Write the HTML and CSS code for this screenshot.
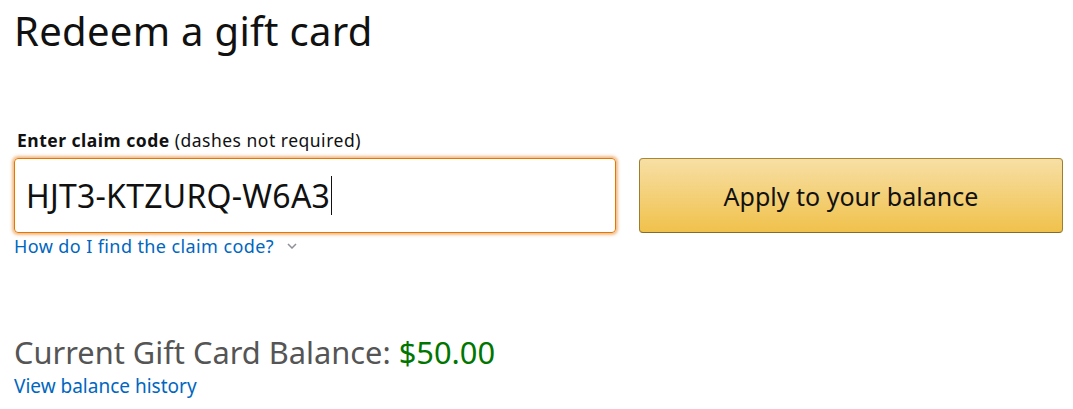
FILE: index.html
```html
<!DOCTYPE html>
<html lang="en">
<head>
<meta charset="utf-8">
<title>Redeem a gift card</title>
<link rel="stylesheet" href="styles.css">
</head>
<body>
<main class="page">
  <h1 class="title">Redeem a gift card</h1>
  <section class="claim">
    <label class="label" for="code"><b>Enter claim code</b> (dashes not required)</label>
    <div class="row">
      <div class="input"><span class="code">HJT3-KTZURQ-W6A3</span><span class="caret"></span></div>
      <button class="apply">Apply to your balance</button>
    </div>
    <a class="link find" href="#">How do I find the claim code?<svg class="chev" width="10" height="6" viewBox="0 0 10 6"><path d="M1 1l4 4 4-4" fill="none" stroke="#8d9096" stroke-width="1.5"/></svg></a>
  </section>
  <section class="balance">
    <div class="bal-line">Current Gift Card Balance: <span class="amount">$50.00</span></div>
    <a class="link history" href="#">View balance history</a>
  </section>
</main>
</body>
</html>
```
FILE: styles.css
```css
html, body { margin: 0; padding: 0; background: #fff; }
body { font-family: "Noto Sans", "Open Sans", sans-serif; color: #111; }
.page { padding: 4px 10px 0 14px; }
.title { font-size: 40px; letter-spacing: 0.3px; font-weight: 400; margin: 0; line-height: 54px; color: #111; }
.claim { margin-top: 70px; }
.label { display: block; font-size: 17.5px; letter-spacing: 0.5px; line-height: 24px; padding-left: 3px; margin-bottom: 6px; }
.label b { font-weight: 700; }
.row { display: flex; gap: 23px; }
.input { box-sizing: border-box; width: 603px; height: 75px; border: 1px solid #e77600; border-radius: 4px; box-shadow: 0 0 3px 2px rgba(228,121,17,.5); display: flex; align-items: center; padding-left: 11px; }
.code { font-size: 32px; letter-spacing: 0.25px; color: #111; line-height: 40px; }
.caret { display: inline-block; width: 1px; height: 39px; background: #111; margin-left: 1px; }
.apply { box-sizing: border-box; width: 425px; height: 75px; border: 1px solid; border-color: #a88734 #9c7e31 #846a29; border-radius: 4px; background: linear-gradient(to bottom, #f7dfa5, #f0c14b); font-family: inherit; font-size: 25px; color: #111; cursor: pointer; padding: 0; }
.link { color: #0066c0; text-decoration: none; }
.find { display: inline-flex; align-items: center; gap: 13px; margin-top: 0; font-size: 18px; letter-spacing: 0.4px; line-height: 26px; }
.balance { margin-top: 74px; }
.bal-line { font-size: 30.8px; color: #555; line-height: 38px; }
.amount { color: #007600; }
.history { display: block; font-size: 19px; line-height: 26px; margin-top: 2px; }
```
